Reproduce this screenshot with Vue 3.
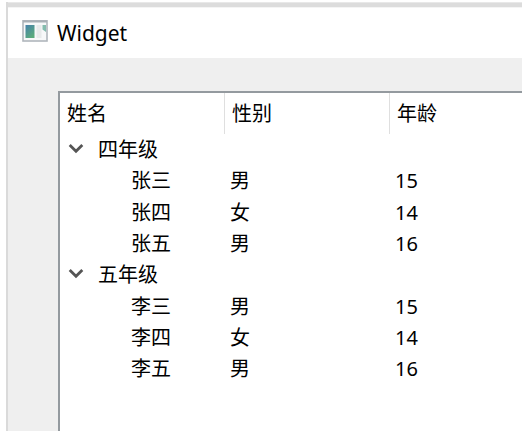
<script setup>
const groups = [
  {
    name: '四年级',
    students: [
      { name: '张三', gender: '男', age: 15 },
      { name: '张四', gender: '女', age: 14 },
      { name: '张五', gender: '男', age: 16 },
    ],
  },
  {
    name: '五年级',
    students: [
      { name: '李三', gender: '男', age: 15 },
      { name: '李四', gender: '女', age: 14 },
      { name: '李五', gender: '男', age: 16 },
    ],
  },
]
</script>

<template>
  <div class="desktop">
    <div class="window">
      <header class="titlebar">
        <svg class="app-icon" width="26" height="22" viewBox="0 0 26 22">
          <defs>
            <linearGradient id="pane" x1="0" y1="0" x2="0.6" y2="1">
              <stop offset="0" stop-color="#4581ab" />
              <stop offset="1" stop-color="#5aab7c" />
            </linearGradient>
          </defs>
          <rect x="1" y="0.8" width="24" height="20.2" fill="#f7f8f9" stroke="#b0b6bc" stroke-width="1.6" />
          <path d="M1 1.6H25" stroke="#a9b0b6" stroke-width="1.8" />
          <rect x="3.5" y="5" width="9" height="13" fill="url(#pane)" />
          <rect x="14.5" y="5" width="5" height="13" fill="#e8eaeb" />
          <path d="M20.5 5H24V12L20.5 9.5Z" fill="#84bcae" />
        </svg>
        <span class="title">Widget</span>
      </header>
      <main class="client">
        <div class="tree">
          <div class="row head">
            <span class="th">姓名</span>
            <span class="th">性别</span>
            <span class="th">年龄</span>
          </div>
          <template v-for="g in groups" :key="g.name">
            <div class="row">
              <span class="group">
                <svg class="chevron" width="16" height="12" viewBox="0 0 16 12">
                  <path d="M1.7 2L8 8.3L14.3 2" fill="none" stroke="#555" stroke-width="2.8" />
                </svg>
                {{ g.name }}
              </span>
            </div>
            <div v-for="s in g.students" :key="s.name" class="row">
              <span class="name">{{ s.name }}</span>
              <span class="cell">{{ s.gender }}</span>
              <span class="cell">{{ s.age }}</span>
            </div>
          </template>
        </div>
      </main>
    </div>
  </div>
</template>

<style>
body {
  margin: 0;
  background: #fff;
}
</style>

<style scoped>
.desktop {
  box-sizing: border-box;
  width: 522px;
  height: 431px;
  padding: 2px 0 0 6px;
  overflow: hidden;
  background: #fff;
  color: #000;
  font: 20px/31.33px "Noto Sans", "Noto Sans CJK SC", sans-serif;
}
.window {
  box-sizing: border-box;
  height: 429px;
  display: flex;
  flex-direction: column;
  border-left: 2px solid #dadada;
  background: linear-gradient(#e8e8e8 0 1px, #dcdcdc 1px 5px, #f4f4f4 5px 6px, #fff 6px);
  padding-top: 6px;
}
.titlebar {
  box-sizing: border-box;
  height: 50px;
  display: flex;
  align-items: center;
  padding: 0 0 4px 14px;
  background: #fff;
}
.title {
  margin-left: 9px;
  padding-top: 5px;
  font-size: 21px;
}
.client {
  flex: 1;
  display: flex;
  padding: 33px 0 0 50px;
  background: #efefef;
}
.tree {
  flex: 1;
  border-top: 2px solid #949a9f;
  border-left: 2px solid #949a9f;
  background: #fff;
}
.row {
  display: grid;
  grid-template-columns: 164px 165px 1fr;
  height: 31.33px;
}
.head {
  height: 41px;
  line-height: 41px;
}
.th {
  padding-left: 7px;
}
.th + .th {
  border-left: 1px solid #dfdfdf;
}
.group {
  display: flex;
  align-items: center;
  padding-left: 8px;
}
.chevron {
  margin: 0 14px 2px 0;
}
.name {
  padding-left: 71px;
}
.cell {
  padding-left: 6px;
}
</style>
